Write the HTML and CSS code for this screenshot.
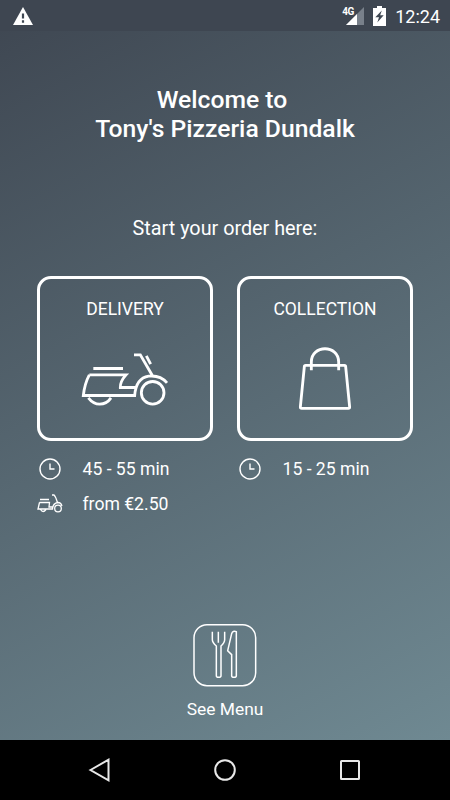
FILE: index.html
```html
<!DOCTYPE html>
<html lang="en">
<head>
<meta charset="utf-8">
<title>Tony's Pizzeria Dundalk</title>
<link rel="stylesheet" href="styles.css">
</head>
<body>
<svg class="defs" width="0" height="0" aria-hidden="true">
  <symbol id="scooter" viewBox="150 240 270 170">
    <path d="M312 254H331L367 316M349 257L362 282M190 295H279M178 314H288Q270 334 271 352H318M178 314Q164 340 160 376H314Q318 324 356 318Q390 314 411 338M175 383Q190 402 209 402Q230 402 243 383"/>
    <circle cx="368" cy="368" r="34"/>
  </symbol>
  <symbol id="clock" viewBox="0 0 22 22">
    <circle cx="11" cy="11" r="10"/><path d="M11 5.500V11H15.500"/>
  </symbol>
</svg>
<div class="screen">
  <header class="status">
    <svg class="warning" width="20" height="18" viewBox="0 0 20 18"><path d="M10 0L20 18H0Z" fill="#fff"/><path d="M10 6.500V11.500M10 13.300V15.700" stroke="#3e4752" stroke-width="2.200"/></svg>
    <div class="signal">
      <svg width="23" height="18" viewBox="0 0 23 18"><path d="M22 0V18H4Z" fill="#78808a"/><path d="M15 7V18H4Z" fill="#fff"/></svg>
      <span class="network">4G</span>
    </div>
    <svg class="battery" width="13" height="20" viewBox="0 0 13 20"><path d="M4 0H9V2H13V20H0V2H4Z" fill="#fff"/><path d="M8.800 4.500L2.300 11.300H6L4.300 16.500L10.700 9.300H7.200Z" fill="#3e4752"/></svg>
    <span class="time">12:24</span>
  </header>
  <main class="content">
    <h1>Welcome to&nbsp;<br>Tony's Pizzeria Dundalk</h1>
    <p class="prompt">Start your order here:</p>
    <div class="options">
      <section class="option">
        <div class="card"><h2>DELIVERY</h2>
          <svg class="scooter" width="90" height="57"><use href="#scooter"/></svg>
        </div>
        <div class="info"><span class="slot"><svg class="clock" width="22" height="22"><use href="#clock"/></svg></span>45 - 55 min</div>
        <div class="info"><span class="slot"><svg class="scooter small" width="26" height="19" viewBox="0 0 26 19"><path d="M15 1H17Q19 3 20.500 9M3 5.500H12M2.500 8.500H12.500L12 13H15.500M2.500 8.500L1 15H15.500Q16 9 21 8.500Q24 8.500 25 12M3.500 15.500Q6 19.500 9 15.500"/><circle cx="21" cy="14.500" r="3.300"/></svg></span>from €2.50</div>
      </section>
      <section class="option">
        <div class="card"><h2>COLLECTION</h2>
          <svg class="bag" width="54" height="65" viewBox="204 228 162 195"><path d="M227 286H343Q347 286 347 290L359 411Q359 415 355 415H215Q211 415 211 411L223 290Q223 286 227 286ZM244 301V276C244 223 326 223 326 276V301"/></svg>
        </div>
        <div class="info"><span class="slot"><svg class="clock" width="22" height="22"><use href="#clock"/></svg></span>15 - 25 min</div>
      </section>
    </div>
    <div class="menu">
      <svg class="menu-icon" width="64" height="64" viewBox="39 24 192 192"><rect x="42" y="29" width="185" height="183" rx="39"/><path d="M97 50V74Q97 82 109 93V182Q109 187 116 187Q123 187 123 182V93Q134 82 134 74V50M115 50V83M155 119V182Q155 187 162 187Q169 187 169 182V50Q158 46 155 56L143 107Z"/></svg>
      <span>See Menu</span>
    </div>
  </main>
  <nav class="nav">
    <svg width="24" height="24" viewBox="0 0 24 24"><path d="M2.500 12L20.500 1.700V22.300Z"/></svg>
    <svg width="24" height="24" viewBox="0 0 24 24"><circle cx="12" cy="12" r="9.800"/></svg>
    <svg width="24" height="24" viewBox="0 0 24 24"><rect x="3" y="3" width="18" height="18" rx=".5"/></svg>
  </nav>
</div>
</body>
</html>
```
FILE: styles.css
```css
* { box-sizing: border-box; }
body { margin: 0; font-family: Roboto, sans-serif; color: #fff; }
svg { display: block; fill: none; }
.defs { position: absolute; }
.screen {
  width: 450px;
  height: 800px;
  display: flex;
  flex-direction: column;
  background: linear-gradient(152deg, #3e4651 0%, #6f8992 100%) 0 0 / 450px 740px no-repeat;
}
.status {
  height: 31px;
  display: flex;
  align-items: flex-start;
  padding: 6px 10px 0 13px;
  background: #3e4651;
}
.warning { margin-top: 1px; }
.signal { position: relative; margin: 1px 8px 0 auto; }
.network {
  position: absolute;
  left: 0;
  top: -1px;
  font: 700 10px/11px "Roboto", sans-serif;
  letter-spacing: -.5px;
}
.time { margin-left: 9px; font-size: 18px; line-height: 21px; }
.content {
  flex: 1;
  display: flex;
  flex-direction: column;
  align-items: center;
  padding-top: 54px;
}
h1 { margin: 0; font-size: 24.7px; line-height: 29px; font-weight: 500; text-align: center; }
.prompt { margin: 74px 0 0; font-size: 19.8px; line-height: 24px; }
.options { display: flex; gap: 24px; margin-top: 35px; height: 243px; }
.option { width: 176px; }
.card {
  height: 165px;
  border: 3px solid #fff;
  border-radius: 14px;
  display: flex;
  flex-direction: column;
  align-items: center;
  margin-bottom: 10px;
}
h2 { margin: 20px 0 0; font-size: 17.5px; line-height: 20px; font-weight: 400; }
.scooter, .bag { stroke: #fff; stroke-width: 8.5; }
.card .scooter { margin-top: 31px; }
.bag { margin-top: 27px; }
.info { display: flex; align-items: center; height: 35px; font-size: 17.6px; }
.slot { width: 45.5px; display: flex; }
.clock { margin-left: 2px; stroke: #fff; stroke-width: 1.4; }
.scooter.small { stroke-width: 1.3; }
.menu {
  margin-top: 104px;
  display: flex;
  flex-direction: column;
  align-items: center;
  font-size: 17.4px;
  line-height: 22px;
}
.menu-icon {
  stroke: #fff;
  stroke-width: 4.5;
  margin-bottom: 11px;
}
.nav {
  height: 60px;
  background: #000;
  display: flex;
  justify-content: space-between;
  align-items: center;
  padding: 0 88px;
  stroke: #e8e8e8;
  stroke-width: 2;
}
```
